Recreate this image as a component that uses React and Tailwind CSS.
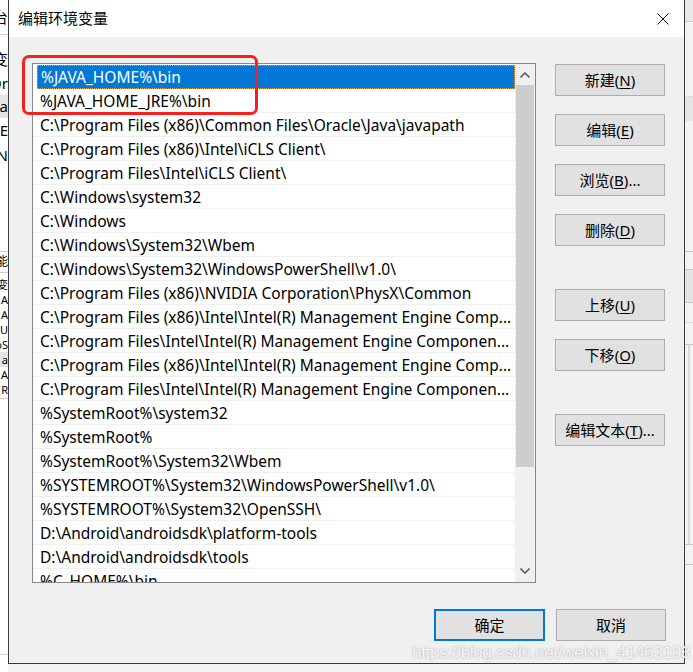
import React from "react";

const paths = [
  "%JAVA_HOME%\\bin",
  "%JAVA_HOME_JRE%\\bin",
  "C:\\Program Files (x86)\\Common Files\\Oracle\\Java\\javapath",
  "C:\\Program Files (x86)\\Intel\\iCLS Client\\",
  "C:\\Program Files\\Intel\\iCLS Client\\",
  "C:\\Windows\\system32",
  "C:\\Windows",
  "C:\\Windows\\System32\\Wbem",
  "C:\\Windows\\System32\\WindowsPowerShell\\v1.0\\",
  "C:\\Program Files (x86)\\NVIDIA Corporation\\PhysX\\Common",
  "C:\\Program Files (x86)\\Intel\\Intel(R) Management Engine Comp...",
  "C:\\Program Files\\Intel\\Intel(R) Management Engine Componen...",
  "C:\\Program Files (x86)\\Intel\\Intel(R) Management Engine Comp...",
  "C:\\Program Files\\Intel\\Intel(R) Management Engine Componen...",
  "%SystemRoot%\\system32",
  "%SystemRoot%",
  "%SystemRoot%\\System32\\Wbem",
  "%SYSTEMROOT%\\System32\\WindowsPowerShell\\v1.0\\",
  "%SYSTEMROOT%\\System32\\OpenSSH\\",
  "D:\\Android\\androidsdk\\platform-tools",
  "D:\\Android\\androidsdk\\tools",
  "%C_HOME%\\bin",
];

const font = "font-['Noto_Sans','Noto_Sans_CJK_SC',sans-serif]";

const Btn = ({ label, hotkey, tail = "", primary = false, className = "" }) => (
  <div
    className={`w-[110px] h-[32px] flex items-center justify-center bg-[#e1e1e1] text-[15px] text-black ${
      primary ? "border-2 border-[#0078d7]" : "border border-[#adadad]"
    } ${className}`}
  >
    {label}
    {hotkey && (
      <>
        (<span className="underline underline-offset-2">{hotkey}</span>){tail}
      </>
    )}
  </div>
);

// bits of the windows behind the dialog
const LeftStrip = () => (
  <div className="w-[8px] h-full bg-white overflow-hidden text-[15px] text-black flex flex-col">
    <div className="h-[35px] flex items-center justify-end whitespace-nowrap border-b border-[#d0d0d0]">
      平台
    </div>
    <div className="h-[24px] mt-[12px] flex items-center justify-end whitespace-nowrap">变</div>
    <div className="h-[24px] flex items-center justify-end whitespace-nowrap">Or</div>
    <div className="h-[23px] flex items-center justify-end whitespace-nowrap bg-[#e5e5e5]">a</div>
    <div className="h-[24px] flex items-center justify-end whitespace-nowrap">E</div>
    <div className="h-[26px] flex items-center justify-end whitespace-nowrap">N</div>
    <div className="h-[84px] border-b border-[#d0d0d0]" />
    <div className="h-[21px] flex items-center justify-end whitespace-nowrap border-b border-[#d0d0d0] text-[12px]">
      功能
    </div>
    <div className="flex flex-col text-[11px] leading-[15px] pt-[4px]">
      {["变", "A", "A", "IU", "oS"].map((t, i) => (
        <div key={i} className="h-[15px] flex justify-end whitespace-nowrap">{t}</div>
      ))}
      <div className="h-[15px] flex justify-end whitespace-nowrap bg-[#e5e5e5]">a</div>
      {["A", "R"].map((t, i) => (
        <div key={i} className="h-[15px] flex justify-end whitespace-nowrap">{t}</div>
      ))}
    </div>
    <div className="h-[256px] border-t border-[#d0d0d0] mt-[1px]" />
    <div className="flex-1 border-t border-[#d0d0d0]" />
  </div>
);

const RightStrip = () => (
  <div className="flex-1 h-full bg-[#f3f3f3] flex flex-col">
    <div className="h-[22px] bg-[#e8e8e8] border-b border-[#cfcfcf]" />
    <div className="h-[75px] border-b border-[#dcdcdc]" />
    <div className="h-[24px] bg-[#e6e6e6]" />
    <div className="h-[131px] border-b border-[#c8c8c8]" />
    <div className="h-[18px] border-b border-[#c8c8c8]" />
    <div className="h-[33px] bg-[#e4e4e4] border-b border-[#c8c8c8]" />
    <div className="h-[20px] border-b border-[#dcdcdc]" />
    <div className="h-[22px] border-b border-[#c8c8c8]" />
    <div className="h-[200px] border-b border-[#c8c8c8] flex justify-center">
      <div className="w-[2px] bg-[#dadada]" />
    </div>
    <div className="h-[20px] border-b border-[#c8c8c8]" />
    <div className="flex-1" />
  </div>
);

const Chevron = ({ up }) => (
  <svg width="10" height="6" viewBox="0 0 10 6">
    <path
      d={up ? "M0.5 5.5 L5 1 L9.5 5.5" : "M0.5 0.5 L5 5 L9.5 0.5"}
      fill="none"
      stroke="#606060"
      strokeWidth="1.6"
    />
  </svg>
);

export default function App() {
  return (
    <div className={`relative w-[693px] h-[672px] overflow-hidden flex bg-[#f3f3f3] ${font}`}>
      <LeftStrip />

      {/* dialog */}
      <div className="w-[677px] h-[664px] flex flex-col border-l border-r border-b border-[#3a3a3a] bg-[#f0f0f0] shrink-0">
        <div className="h-[37px] bg-white flex items-center justify-between pl-[9px] pr-[15px]">
          <span className="text-[15px] text-black font-['Noto_Sans_CJK_SC',sans-serif]">编辑环境变量</span>
          <svg width="12" height="12" viewBox="0 0 12 12">
            <path d="M0.5 0.5 L11.5 11.5 M11.5 0.5 L0.5 11.5" stroke="#111" strokeWidth="1" />
          </svg>
        </div>

        <div className="flex pt-[26px] pl-[23px]">
          {/* list */}
          <div className="w-[504px] h-[520px] border border-[#828790] bg-white flex">
            <div className="flex-1 overflow-hidden pt-[1px]">
              {paths.map((p, i) => (
                <div
                  key={i}
                  className={`h-[24px] flex items-center whitespace-nowrap overflow-hidden text-[15.5px] pt-[2px] ${
                    i === 0
                      ? "ml-[4px] pl-[3px] bg-[#0078d7] text-white border border-dotted border-[#e2a04c]"
                      : "pl-[7px] text-black border-b border-[#f0f0f0]"
                  }`}
                >
                  {p}
                </div>
              ))}
            </div>
            <div className="w-[20px] bg-[#f0f0f0] flex flex-col">
              <div className="h-[21px] flex items-center justify-center">
                <Chevron up />
              </div>
              <div className="h-[382px] bg-[#cdcdcd] mx-[1px]" />
              <div className="flex-1" />
              <div className="h-[22px] flex items-center justify-center">
                <Chevron />
              </div>
            </div>
          </div>

          {/* side buttons */}
          <div className="ml-[19px] pt-[1px] flex flex-col">
            <Btn label="新建" hotkey="N" />
            <Btn label="编辑" hotkey="E" className="mt-[18px]" />
            <Btn label="浏览" hotkey="B" tail="..." className="mt-[18px]" />
            <Btn label="删除" hotkey="D" className="mt-[18px]" />
            <Btn label="上移" hotkey="U" className="mt-[43px]" />
            <Btn label="下移" hotkey="O" className="mt-[18px]" />
            <Btn label="编辑文本" hotkey="T" tail="..." className="mt-[43px]" />
          </div>
        </div>

        <div className="flex justify-end gap-[11px] pr-[18px] mt-[26px]">
          <Btn label="确定" primary className="w-[111px]" />
          <Btn label="取消" />
        </div>
      </div>

      <RightStrip />

      {/* annotation + watermark overlays */}
      <div className="absolute left-[22px] top-[55px] w-[236px] h-[60px] border-[3px] border-[#f52020] rounded-[7px]" />
      <div className="absolute left-[412px] top-[643px] text-[17px] leading-[19px] tracking-[-0.3px] text-[#f6f6f6] font-['Liberation_Sans',sans-serif] [text-shadow:0_0_2px_#a0a0a0] whitespace-nowrap">
        https://blog.csdn.net/weixin_41463193
      </div>
    </div>
  );
}
